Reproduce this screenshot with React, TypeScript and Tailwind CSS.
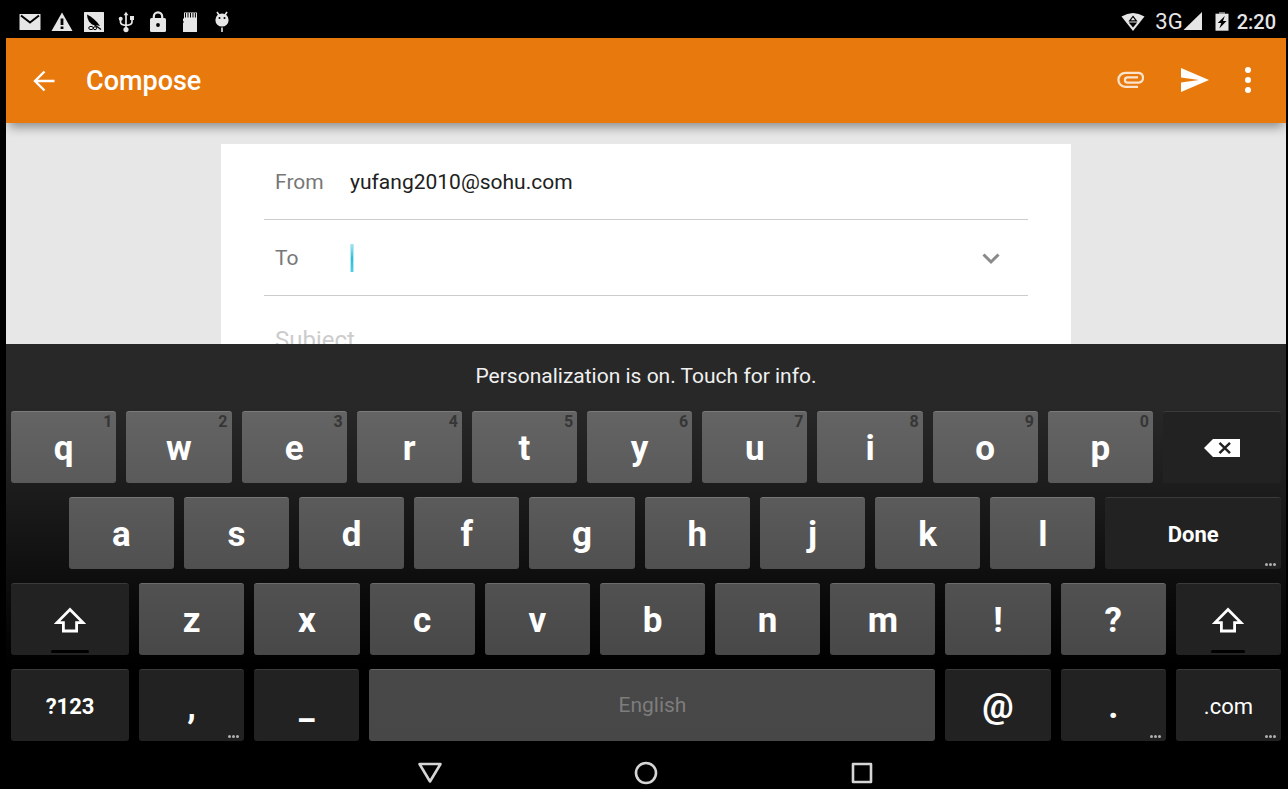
import type { ReactNode } from 'react'

interface KeyDef {
  label: string
  content?: ReactNode
  width?: string
  hint?: string
  tone?: string
  text?: string
  more?: boolean
  bar?: string
}

const ROW1_TONE = 'from-[#646464] to-[#5a5a5a] border-[#7b7b7b] text-white'
const ROW2_TONE = 'from-[#5b5b5b] to-[#505050] border-[#757575] text-white'
const ROW3_TONE = 'from-[#515151] to-[#484848] border-[#6c6c6c] text-white'
const SPACE_TONE = 'from-[#484848] to-[#474747] border-[#666666] text-[#7d7d7d]'
const DARK_TONE = 'from-[#222222] to-[#222222] border-[#3a3a3a] text-white'

const LETTER_TEXT = 'text-[35px] font-bold pt-[3px]'

function ShiftIcon() {
  return (
    <svg viewBox="0 0 32 26" className="w-8 h-[26px]" fill="none" stroke="white" strokeWidth="2.8">
      <path d="M16 2.4 29 15.6H22.6V24H9.4V15.6H3Z" />
    </svg>
  )
}

function BackspaceIcon() {
  return (
    <svg viewBox="0 0 36 18" className="w-9 h-[18px]">
      <path d="M9 0H36V18H9L0 9Z" fill="white" />
      <path d="M15.5 3.8 26 14.2M26 3.8 15.5 14.2" stroke="#222222" strokeWidth="2.4" />
    </svg>
  )
}

const row1: KeyDef[] = [
  ...'qwertyuiop'.split('').map((label, i) => ({ label, hint: String((i + 1) % 10), tone: ROW1_TONE })),
  { label: 'Delete', content: <BackspaceIcon />, width: 'w-[10%]', text: 'text-base pt-px' },
]

const row2: KeyDef[] = [
  ...'asdfghjkl'.split('').map((label) => ({ label, tone: ROW2_TONE })),
  { label: 'Done', width: 'w-[14.5%]', text: 'text-[22px] font-bold pt-px', more: true },
]

const row3: KeyDef[] = [
  { label: 'Shift', content: <ShiftIcon />, width: 'w-[10%]', text: 'text-base pt-px', bar: 'w-[38px]' },
  ...'zxcvbnm!?'.split('').map((label) => ({ label, tone: ROW3_TONE })),
  { label: 'Right shift', content: <ShiftIcon />, text: 'text-base pt-px', bar: 'w-[34px]' },
]

const row4: KeyDef[] = [
  { label: '?123', width: 'w-[10%]', text: 'text-[22px] font-bold pt-px' },
  { label: ',', more: true },
  { label: '_' },
  { label: 'English', width: 'w-[45%]', tone: SPACE_TONE, text: 'text-[21px] font-normal' },
  { label: '@' },
  { label: '.', more: true },
  { label: '.com', text: 'text-[22px] font-normal pt-px', more: true },
]

function Key({ label, content, width = 'w-[9%]', hint, tone = DARK_TONE, text = LETTER_TEXT, more, bar }: KeyDef) {
  return (
    <div className={`px-[5px] ${width}`}>
      <button
        type="button"
        aria-label={content ? label : undefined}
        className={`relative flex h-[72px] w-full items-center justify-center rounded-[3px] border-t bg-linear-to-b ${tone} ${text}`}
      >
        {content ?? label}
        {hint && <span className="absolute right-1 top-0 text-base leading-5 text-[#363636]">{hint}</span>}
        {more && (
          <span className="absolute bottom-[3px] right-[5px] flex gap-px">
            <i className="size-[3px] rounded-full bg-[#b0b0b0]" />
            <i className="size-[3px] rounded-full bg-[#b0b0b0]" />
            <i className="size-[3px] rounded-full bg-[#b0b0b0]" />
          </span>
        )}
        {bar && <span className={`absolute bottom-[2px] h-[3px] rounded-full bg-black ${bar}`} />}
      </button>
    </div>
  )
}

function StatusBar() {
  return (
    <div className="flex h-[38px] items-center justify-between pl-[13px] pr-[10px] pt-[6px] text-[#e6e6e6]">
      <div className="flex gap-[10px]">
        {/* mail */}
        <svg viewBox="0 0 22 22" className="size-[22px]" fill="currentColor">
          <rect x="0.5" y="3" width="21" height="16" rx="0.5" />
          <path d="M2 4.5 11 11.5 20 4.5" fill="none" stroke="black" strokeWidth="2" />
        </svg>
        {/* warning */}
        <svg viewBox="0 0 22 22" className="size-[22px]" fill="currentColor">
          <path d="M11 1.5 21.5 20H.5Z" />
          <path d="M9.6 7.5h2.8v6.5H9.6zM9.6 15.6h2.8v2.4H9.6z" fill="black" />
        </svg>
        {/* feather app */}
        <svg viewBox="0 0 22 22" className="size-[22px]">
          <rect x="1" y="1" width="20" height="20" rx="0.5" fill="currentColor" />
          <path d="M4 3.5C9 6 13.5 9.5 17 15L12.5 14 9 13.5 6 10.5 4.5 7Z" fill="black" />
          <path d="M9 12 18 18.5" stroke="black" strokeWidth="1.4" />
          <ellipse cx="8" cy="17" rx="2.3" ry="1.6" fill="none" stroke="black" />
          <ellipse cx="12" cy="17.2" rx="1.6" ry="1.5" fill="none" stroke="black" />
        </svg>
        {/* usb */}
        <svg viewBox="0 0 22 22" className="size-[22px]" fill="currentColor">
          <path d="M11 3V18M5.5 8V11Q5.5 14 11 14.5Q17 14 17 11V6" fill="none" stroke="currentColor" strokeWidth="1.7" />
          <path d="M11 .8 13.4 4.2H8.6Z" />
          <rect x="15" y="5" width="4" height="4" />
          <circle cx="5.7" cy="7.8" r="2" />
          <circle cx="11" cy="18.6" r="2.6" />
        </svg>
        {/* lock */}
        <svg viewBox="0 0 22 22" className="size-[22px]" fill="currentColor">
          <rect x="3" y="7" width="16" height="14" rx="1.5" />
          <path d="M6.8 8V5.5a4.2 4.2 0 0 1 8.4 0V8" fill="none" stroke="currentColor" strokeWidth="2.2" />
          <circle cx="11" cy="14" r="1.9" fill="black" />
        </svg>
        {/* sd card */}
        <svg viewBox="0 0 22 22" className="size-[22px]" fill="currentColor">
          <path d="M5 1.5H18V21H4V12l1-1-1-1V8l1-1Z" />
          <path d="M6.5 2v4.5M9 2v4.5M11.5 2v4.5M14 2v4.5M16.4 2v4.5" stroke="black" />
        </svg>
        {/* debug droid */}
        <svg viewBox="0 0 22 22" className="size-[22px]" fill="currentColor">
          <circle cx="11" cy="9" r="6.6" />
          <path d="M6 1 8 4M16 1 14 4M11 16.5V21" stroke="currentColor" strokeWidth="1.6" />
          <circle cx="8.5" cy="7" r="1" fill="black" />
          <circle cx="13.5" cy="7" r="1" fill="black" />
        </svg>
      </div>
      <div className="flex items-center">
        {/* wifi */}
        <svg viewBox="0 0 24 20" className="h-5 w-6" fill="currentColor">
          <path d="M12 19 .5 4.5Q12-2.5 23.5 4.5Z" />
          <path d="M12 4.4 15.4 8.8H8.6Z" fill="none" stroke="black" strokeWidth="1.2" />
          <path d="M12 15.4 16.2 10.6H7.8Z" fill="black" />
        </svg>
        <span className="ml-[10px] text-[22px] leading-6">3G</span>
        <svg viewBox="0 0 20 20" className="size-5" fill="currentColor">
          <path d="M19 0V18H.5Z" />
        </svg>
        {/* charging battery */}
        <svg viewBox="0 0 14 20" className="ml-3 h-5 w-[14px]" fill="currentColor">
          <path d="M4 0H10V3H4Z" fill="#777777" />
          <rect x="0.5" y="1.7" width="13" height="17" />
          <path d="M9.8 4 2.8 11H6.3L4.3 16.5 11.5 9H8Z" fill="black" />
        </svg>
        <span className="ml-2 text-xl font-medium leading-6">2:20</span>
      </div>
    </div>
  )
}

function AppBar() {
  return (
    <header className="relative z-10 flex h-[85px] items-center bg-[#e8790d] pl-[26px] pr-[35px] text-white shadow-[0_7px_10px_-3px_rgba(0,0,0,0.4)]">
      <button type="button" aria-label="Back">
        <svg viewBox="0 0 24 24" className="size-6" fill="none" stroke="currentColor" strokeWidth="2.4">
          <path d="M22.5 12H3M12.5 2.5 3 12 12.5 21.5" />
        </svg>
      </button>
      <h1 className="ml-[30px] flex-1 pt-px text-[27px] font-medium leading-8">Compose</h1>
      <div className="flex items-center pb-[2px]">
        <button type="button" aria-label="Attach file">
          <svg viewBox="0 0 28 18" className="h-[18px] w-7" fill="none" stroke="#fbe3cc" strokeWidth="2.2">
            <path d="M21 15.8H8.4A6.6 6.6 0 0 1 8.4 1.8H22A5 5 0 0 1 22 11.6H10.5A2.4 2.4 0 0 1 10.5 6.4H21" />
          </svg>
        </button>
        <button type="button" aria-label="Send" className="ml-9">
          <svg viewBox="0 0 28 24" className="h-6 w-7" fill="currentColor">
            <path d="M0 0 28 12 0 24V14.5L18 12 0 9.5Z" />
          </svg>
        </button>
        <button type="button" aria-label="More options" className="ml-9">
          <svg viewBox="0 0 6 28" className="h-7 w-[6px]" fill="currentColor">
            <circle cx="3" cy="4" r="3" />
            <circle cx="3" cy="14" r="3" />
            <circle cx="3" cy="24" r="3" />
          </svg>
        </button>
      </div>
    </header>
  )
}

function ComposeForm() {
  return (
    <form className="mx-auto mt-[21px] w-[66.4%] bg-white px-[43px] text-[21px] text-[#212121]">
      <div className="flex h-[76px] items-center border-b border-[#cccccc] pl-[11px] pt-[2px]">
        <label htmlFor="from" className="w-[75px] text-[#777777]">From</label>
        <input id="from" type="email" defaultValue="yufang2010@sohu.com" className="min-w-0 flex-1 outline-none" />
      </div>
      <div className="flex h-[76px] items-center border-b border-[#cccccc] pl-[11px] pr-7 pt-[2px]">
        <label htmlFor="to" className="w-[75px] text-[#777777]">To</label>
        <span className="mb-[2px] h-7 w-1 border-x border-[#b9eaf1] bg-linear-to-b from-[#a5e5ee] via-[#22bfd6] to-[#4fcde0]" />
        <input id="to" type="email" className="min-w-0 flex-1 outline-none" />
        <button type="button" aria-label="Add Cc/Bcc">
          <svg viewBox="0 0 18 12" className="h-3 w-[18px]" fill="none" stroke="#8a8a8a" strokeWidth="3">
            <path d="M1.5 1.5 9 9 16.5 1.5" />
          </svg>
        </button>
      </div>
      <div className="flex h-[88px] items-center border-b border-[#cccccc] pl-[11px]">
        <input
          type="text"
          aria-label="Subject"
          placeholder="Subject"
          className="min-w-0 flex-1 text-2xl outline-none placeholder:text-[#cccccc]"
        />
      </div>
    </form>
  )
}

function Keyboard() {
  return (
    <section
      aria-label="Keyboard"
      className="shrink-0 bg-linear-to-b/srgb from-[#282828] from-15% via-[#1b1b1b] via-38% to-black to-80% pb-[5px]"
    >
      <p className="flex h-[67px] items-center justify-center pb-px text-[21px] text-[#f0f0f0]">
        Personalization is on. Touch for info.
      </p>
      <div className="flex flex-col gap-[14px]">
        {[row1, row2, row3, row4].map((row, i) => (
          <div key={i} className="flex justify-end">
            {row.map((key) => (
              <Key key={key.label} {...key} />
            ))}
          </div>
        ))}
      </div>
    </section>
  )
}

function NavBar() {
  return (
    <nav className="flex h-[43px] shrink-0 items-end justify-center gap-48 bg-black pb-1">
      <button type="button" aria-label="Hide keyboard">
        <svg viewBox="0 0 24 24" className="size-6" fill="none" stroke="#d5d5d5" strokeWidth="2.6" strokeLinejoin="round">
          <path d="M1.5 3H22.5L12 20.5Z" />
        </svg>
      </button>
      <button type="button" aria-label="Home">
        <svg viewBox="0 0 24 24" className="size-6" fill="none" stroke="#d5d5d5" strokeWidth="2.6">
          <circle cx="12" cy="12" r="10" />
        </svg>
      </button>
      <button type="button" aria-label="Recent apps">
        <svg viewBox="0 0 24 24" className="size-6" fill="none" stroke="#d5d5d5" strokeWidth="2.6" strokeLinejoin="round">
          <rect x="3" y="3" width="18" height="18" />
        </svg>
      </button>
    </nav>
  )
}

export default function App() {
  return (
    <div className="flex h-screen flex-col bg-black pl-[6px] pr-[2px] font-['Roboto',sans-serif]">
      <StatusBar />
      <AppBar />
      <main className="min-h-0 flex-1 overflow-hidden bg-[#e7e7e7]">
        <ComposeForm />
      </main>
      <Keyboard />
      <NavBar />
    </div>
  )
}
